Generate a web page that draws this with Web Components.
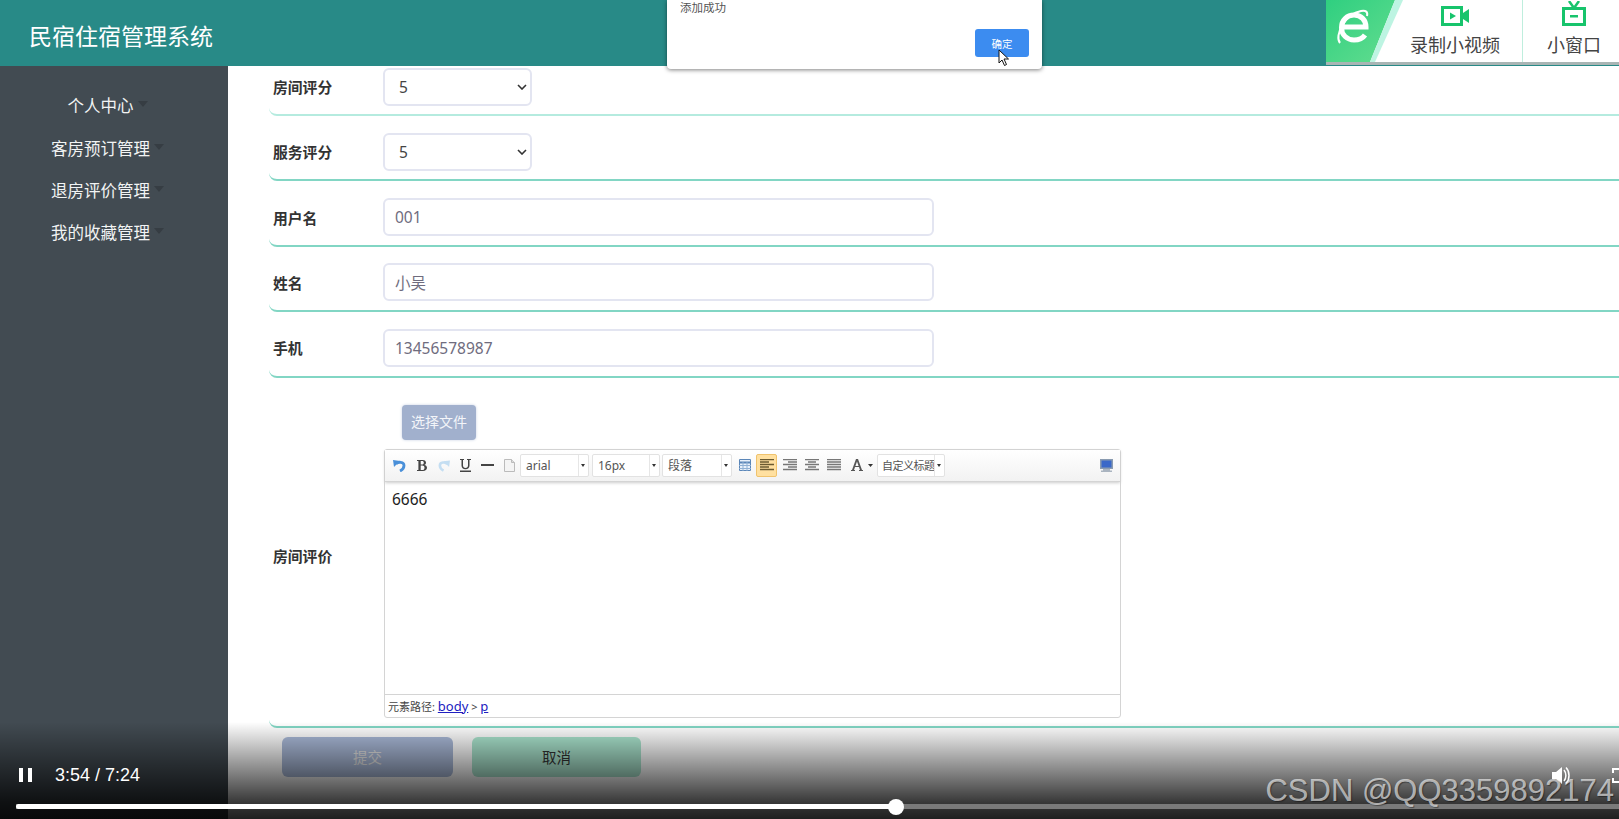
<!DOCTYPE html>
<html lang="zh">
<head>
<meta charset="utf-8">
<title>民宿住宿管理系统</title>
<style>
html, body {
	margin: 0;
	height: 100%;
	overflow: hidden;
}
body {
	font-family: "Noto Sans", "Noto Sans CJK SC", sans-serif;
	color: #333;
}
</style>
</head>
<body>

<stay-app>
	<stay-header slot="header">民宿住宿管理系统</stay-header>
	<side-menu slot="side">
		<menu-item>个人中心</menu-item>
		<menu-item>客房预订管理</menu-item>
		<menu-item>退房评价管理</menu-item>
		<menu-item>我的收藏管理</menu-item>
	</side-menu>

	<form-row label="房间评分" first><select-field>5</select-field></form-row>
	<form-row label="服务评分"><select-field>5</select-field></form-row>
	<form-row label="用户名"><text-field>001</text-field></form-row>
	<form-row label="姓名"><text-field>小吴</text-field></form-row>
	<form-row label="手机"><text-field>13456578987</text-field></form-row>
	<form-row label="房间评价" tall>
		<upload-button>选择文件</upload-button>
		<rich-editor>6666</rich-editor>
	</form-row>
	<form-actions></form-actions>

	<alert-box slot="over">添加成功</alert-box>
	<record-badge slot="over"></record-badge>
	<video-bar slot="over"></video-bar>
</stay-app>

<script>
class Shadowed extends HTMLElement {
	constructor() {
		super();
		this.attachShadow({mode:"open"});
		this.shadowRoot.innerHTML = this.constructor.HTML;
	}
}

class StayApp extends Shadowed {
	static HTML = `
	<style>
	:host {
		display: grid;
		grid-template: 66px 1fr / 228px 1fr;
		height: 819px;
		position: relative;
		overflow: hidden;
	}
	::slotted([slot=header]) { grid-column: 1 / 3; }
	main {
		overflow: hidden;
		padding: 0 0 0 41px;
		background: #fff;
	}
	</style>
	<slot name="header"></slot>
	<slot name="side"></slot>
	<main><slot></slot></main>
	<slot name="over"></slot>
	`;
}

class StayHeader extends Shadowed {
	static HTML = `
	<style>
	:host {
		display: flex;
		align-items: center;
		padding: 4px 0 0 29px;
		box-sizing: border-box;
		background: #288a87;
		color: #fff;
		font-size: 23px;
	}
	</style>
	<slot></slot>
	`;
}

class SideMenu extends Shadowed {
	static HTML = `
	<style>
	:host {
		display: flex;
		flex-direction: column;
		padding-top: 18px;
		background: #424b52;
	}
	</style>
	<slot></slot>
	`;
}

class MenuItem extends Shadowed {
	static HTML = `
	<style>
	:host {
		display: flex;
		justify-content: center;
		align-items: center;
		gap: 4px;
		height: 42.4px;
		padding-right: 27px;
		color: #f2f4f4;
		font-size: 16.5px;
	}
	i {
		width: 0;
		height: 0;
		margin-right: -14px;
		border: 5px solid transparent;
		border-top: 6px solid #363d43;
		border-bottom: 0;
		margin-top: -2px;
	}
	</style>
	<span><slot></slot></span><i></i>
	`;
}

class FormRow extends Shadowed {
	static HTML = `
	<style>
	:host {
		display: flex;
		align-items: center;
		box-sizing: border-box;
		height: 65.4px;
		padding: 16px 0 8px 4px;
		border-bottom: 2px solid #82d6c4;
		border-bottom-left-radius: 8px;
	}
	:host([first]) {
		height: 50px;
		padding-top: 2px;
		border-bottom-color: #b5ebdf;
	}
	:host([first]) label { padding-bottom: 2px; }
	:host([tall]) {
		height: 350px;
		padding: 0 0 0 4px;
	}
	:host([tall]) label { padding-top: 7px; }
	:host([tall]) .control { padding-top: 19px; }
	label {
		flex: none;
		width: 110px;
		font-size: 14.8px;
		font-weight: 700;
		color: #333;
	}
	.control {
		flex: 1;
		min-width: 0;
	}
	</style>
	<label></label>
	<div class="control"><slot></slot></div>
	`;
	connectedCallback() {
		this.shadowRoot.querySelector("label").textContent = this.getAttribute("label");
	}
}

class SelectField extends Shadowed {
	static HTML = `
	<style>
	:host {
		display: flex;
		align-items: center;
		justify-content: space-between;
		box-sizing: border-box;
		width: 149px;
		height: 38px;
		padding: 0 3px 0 14px;
		border: 2px solid #e3e5f1;
		border-radius: 6px;
		background: #fff;
		color: #444;
		font-size: 15.5px;
	}
	svg { display: block; }
	</style>
	<slot></slot>
	<svg width="10" height="6" viewBox="0 0 10 6"><path d="M1 1l4 4 4-4" fill="none" stroke="#333" stroke-width="1.6"/></svg>
	`;
}

class TextField extends Shadowed {
	static HTML = `
	<style>
	:host {
		display: flex;
		align-items: center;
		box-sizing: border-box;
		width: 551px;
		height: 38px;
		padding: 0 10px;
		border: 2px solid #e3e5f1;
		border-radius: 6px;
		background: #fff;
		color: #6f6c7e;
		font-size: 15.5px;
	}
	</style>
	<slot></slot>
	`;
}

class UploadButton extends Shadowed {
	static HTML = `
	<style>
	:host {
		display: flex;
		align-items: center;
		justify-content: center;
		box-sizing: border-box;
		width: 74px;
		height: 35px;
		margin: 0 0 9px 19px;
		padding-bottom: 2px;
		border-radius: 4px;
		background: #a1b0cd;
		box-shadow: 0 0 3px #c6d0e2;
		color: #f3f5f9;
		font-size: 14px;
	}
	</style>
	<slot></slot>
	`;
}

class RichEditor extends Shadowed {
	static HTML = `
	<style>
	:host {
		display: flex;
		flex-direction: column;
		box-sizing: border-box;
		width: 737px;
		height: 269px;
		margin-left: 1px;
		border: 1px solid #d4d4d4;
		border-radius: 3px;
		background: #fff;
	}
	.bar {
		flex: none;
		display: flex;
		align-items: center;
		height: 31px;
		padding-left: 8px;
		background: linear-gradient(#fff, #f2f2f2);
		border-bottom: 1px solid #d4d4d4;
		box-shadow: 0 1px 3px #ccc;
		position: relative;
	}
	.bar svg { display: block; flex: none; }
	.sel {
		flex: none;
		display: flex;
		box-sizing: border-box;
		height: 23px;
		border: 1px solid #e2e2e2;
		border-radius: 2px;
		background: #fff;
		color: #555;
		font-size: 12px;
		line-height: 21px;
		overflow: hidden;
	}
	.sel span { flex: 1; padding-left: 5px; white-space: nowrap; overflow: hidden; border-right: 1px solid #e6e6e6; }
	.sel i { flex: none; width: 9px; position: relative; }
	.sel i::after {
		content: "";
		position: absolute;
		left: 2px;
		top: 9px;
		border: 2.5px solid transparent;
		border-top: 3px solid #333;
		border-bottom: 0;
	}
	.active {
		flex: none;
		display: flex;
		align-items: center;
		justify-content: center;
		box-sizing: border-box;
		width: 21px;
		height: 23px;
		border: 1px solid #f0c36d;
		border-radius: 2px;
		background: #ffe0a0;
	}
	.body {
		flex: 1;
		padding: 5px 7px;
		color: #222;
		font-size: 15.5px;
		line-height: 24px;
	}
	.path {
		flex: none;
		height: 22px;
		padding-left: 3px;
		border-top: 1px solid #d4d4d4;
		color: #444;
		font-size: 11px;
		line-height: 22px;
		white-space: nowrap;
	}
	.path a { color: #2020c0; text-decoration: underline; font-size: 13px; }
	</style>
	<div class="bar">
		<svg width="13" height="13" viewBox="0 0 13 13" style="margin-right:11px"><path d="M0 1l7 1-6 6z" fill="#4a90d9"/><path d="M3 5c2-2.500 8-2.500 8 1.500 0 2.500-2 4.500-4 5.500" fill="none" stroke="#4a90d9" stroke-width="2.800"/></svg>
		<svg width="10" height="11" viewBox="0 0 10 11" style="margin-right:11px"><path d="M0 0h5.500C8 0 9 1.200 9 2.700c0 1.200-.7 2-1.800 2.300C8.800 5.200 10 6.200 10 7.800 10 9.800 8.500 11 6 11H0v-1h1.400V1H0zM3.700 1v3.500h1.400C6.200 4.500 6.800 3.800 6.800 2.700S6.200 1 5.100 1zM3.700 5.500V10h1.700c1.300 0 2.100-.8 2.100-2.300s-.8-2.200-2.200-2.200z" fill="#444"/></svg>
		<svg width="12" height="13" viewBox="0 0 13 13" style="margin-right:10px"><path d="M13 1L6 2l6 6z" fill="#c4def2"/><path d="M10 5C8 2.500 2 2.500 2 6.500 2 9 4 11 6 12" fill="none" stroke="#c4def2" stroke-width="2.800"/></svg>
		<svg width="11" height="13" viewBox="0 0 11 13" style="margin-right:10px"><path d="M0 0h4v1H3v5.500C3 8 4 9 5.500 9S8 8 8 6.500V1H7V0h4v1H9.500v5.500c0 2.400-1.500 3.700-4 3.700s-4-1.300-4-3.700V1H0zM0 11.500h11V13H0z" fill="#444"/></svg>
		<svg width="13" height="2" viewBox="0 0 13 2" style="margin-right:10px"><path d="M0 0h13v2H0z" fill="#444"/></svg>
		<svg width="11" height="13" viewBox="0 0 11 13" style="margin-right:5px"><path d="M.5.500h7l3 3v9H.5z" fill="#f4f4f4" stroke="#bbb"/><path d="M7.500.5v3h3" fill="#ddd" stroke="#bbb"/></svg>
		<div class="sel" style="width:69px;margin-right:3px"><span>arial</span><i></i></div>
		<div class="sel" style="width:68px;margin-right:2px"><span>16px</span><i></i></div>
		<div class="sel" style="width:70px;margin-right:7px"><span>段落</span><i></i></div>
		<svg width="12" height="12" viewBox="0 0 12 12" style="margin-right:5px"><path d="M.5.500h11v11H.5z" fill="#e8f0fa" stroke="#5b86b8"/><path d="M0 3.500h12" stroke="#5b86b8" stroke-width="2"/><path d="M4 3v9M8 3v9M0 6.500h12M0 9.500h12" stroke="#8fb0d4"/></svg>
		<div class="active" style="margin-right:6px"><svg width="14" height="12" viewBox="0 0 14 12"><path d="M0 .5h14M0 3h9M0 5.500h14M0 8h9M0 10.500h14" stroke="#6b5a30" stroke-width="1.300"/></svg></div>
		<svg width="14" height="12" viewBox="0 0 14 12" style="margin-right:8px"><path d="M0 .5h14M5 3h9M0 5.500h14M5 8h9M0 10.500h14" stroke="#777" stroke-width="1.300"/></svg>
		<svg width="14" height="12" viewBox="0 0 14 12" style="margin-right:8px"><path d="M0 .5h14M3 3h8M0 5.500h14M3 8h8M0 10.500h14" stroke="#777" stroke-width="1.300"/></svg>
		<svg width="14" height="12" viewBox="0 0 14 12" style="margin-right:10px"><path d="M0 .5h14M0 3h14M0 5.500h14M0 8h14M0 10.500h14" stroke="#777" stroke-width="1.300"/></svg>
		<svg width="12" height="12" viewBox="0 0 12 12" style="margin-right:5px"><path d="M0 12v-1h1L5 0h2l4 11h1v1H8v-1h1L8 8H4l-1 3h1v1zM4.400 7h3.200L6 2.500z" fill="#555"/></svg>
		<svg width="5" height="3" viewBox="0 0 5 3" style="margin-right:4px"><path d="M0 0h5L2.500 3z" fill="#333"/></svg>
		<div class="sel" style="width:68px"><span style="font-size:11px;letter-spacing:-.5px;padding-left:4px">自定义标题</span><i></i></div>
		<svg width="13" height="13" viewBox="0 0 13 13" style="margin-left:auto;margin-right:7px"><path d="M0 0h13v10H0z" fill="#8a9bb0"/><path d="M1.500 1.500h10v7h-10z" fill="#3a68c8"/><path d="M3 10h7v1.500H3zM1 11.500h11V13H1z" fill="#aab4c0"/></svg>
	</div>
	<div class="body"><slot></slot></div>
	<div class="path">元素路径: <a>body</a> &gt; <a>p</a></div>
	`;
}

class FormActions extends Shadowed {
	static HTML = `
	<style>
	:host {
		display: flex;
		gap: 19px;
		padding: 9px 0 0 13px;
	}
	div {
		display: flex;
		align-items: center;
		justify-content: center;
		width: 171px;
		height: 40px;
		border-radius: 6px;
		font-size: 14.5px;
	}
	.save { background: #aabad9; color: #e8e8e8; }
	.off { background: #abe6cf; color: #333; width: 169px; }
	</style>
	<div class="save">提交</div>
	<div class="off">取消</div>
	`;
}

class AlertBox extends Shadowed {
	static HTML = `
	<style>
	:host {
		position: absolute;
		left: 667px;
		top: 0;
		width: 375px;
		height: 69px;
		box-sizing: border-box;
		padding: 0 13px;
		background: #fff;
		border-radius: 0 0 4px 4px;
		box-shadow: 0 1px 4px rgba(0,0,0,.5);
		color: #555;
		font-size: 11.5px;
	}
	p {
		margin: 0;
		line-height: 15px;
	}
	.row {
		display: flex;
		justify-content: flex-end;
		margin-top: 14px;
	}
	button {
		width: 54px;
		height: 28px;
		padding: 0;
		border: 0;
		border-radius: 3px;
		background: #3c8cf0;
		color: #fff;
		font: inherit;
		font-size: 10.5px;
	}
	svg {
		position: absolute;
		left: 331px;
		top: 49px;
	}
	</style>
	<p><slot></slot></p>
	<div class="row"><button>确定</button></div>
	<svg width="12" height="18" viewBox="0 0 12 18"><path d="M1 1v13l3-3 2.500 5.500 2-1L6 10h4.500z" fill="#fff" stroke="#111"/></svg>
	`;
}

class RecordBadge extends Shadowed {
	static HTML = `
	<style>
	:host {
		position: absolute;
		left: 1326px;
		right: 0;
		top: 0;
		height: 62px;
		display: flex;
		background: #fff;
		border-bottom: 3px solid #a9b5b4;
		color: #444;
		font-size: 18px;
	}
	.logo {
		flex: none;
		width: 78px;
		height: 62px;
		display: block;
	}
	.cell {
		display: flex;
		flex-direction: column;
		align-items: center;
		justify-content: flex-end;
		padding-bottom: 5px;
		gap: 5px;
		box-sizing: border-box;
	}
	.rec { width: 119px; padding-right: 16px; border-right: 1px solid #bfeedd; }
	.mini { flex: 1; padding-left: 6px; }
	.cell svg { display: block; }
	</style>
	<svg class="logo" viewBox="0 0 78 62">
		<defs><linearGradient id="g" x1="0" y1="0" x2="1" y2="1"><stop offset="0" stop-color="#2fcf80"/><stop offset="1" stop-color="#63dd8f"/></linearGradient></defs>
		<path d="M0 0h69L44 62H0z" fill="url(#g)"/>
		<path d="M69 0h8L49 62h-5z" fill="#bdf4e2"/>
		<path d="M16 27h24c0-7-5-12-12-12s-12.500 5-12.500 12.500S21 40 28 40c5 0 9-2 11-5" fill="none" stroke="#fff" stroke-width="5"/>
		<path d="M14 43C8 36 19 14 35 11c5-1 7 1 6 5" fill="none" stroke="#fff" stroke-width="2"/>
	</svg>
	<div class="cell rec">
		<svg width="28" height="20" viewBox="0 0 28 20"><rect x="1.500" y="1.500" width="19" height="17" fill="none" stroke="#17c46c" stroke-width="3"/><path d="M9 6.500l6 3.500-6 3.500z" fill="#17c46c"/><path d="M22 7l6-4v14l-6-4z" fill="#17c46c"/></svg>
		<span>录制小视频</span>
	</div>
	<div class="cell mini">
		<svg width="24" height="25" viewBox="0 0 24 25"><rect x="1.500" y="7.500" width="21" height="16" fill="none" stroke="#17c46c" stroke-width="3"/><path d="M7 0l5 7 5-7" fill="none" stroke="#17c46c" stroke-width="2.500"/><path d="M8 14h8v2.500H8z" fill="#17c46c"/></svg>
		<span>小窗口</span>
	</div>
	`;
}

class VideoBar extends Shadowed {
	static HTML = `
	<style>
	:host {
		position: absolute;
		left: 0;
		right: 0;
		bottom: 0;
		height: 97px;
		display: flex;
		flex-direction: column;
		justify-content: flex-end;
		background: linear-gradient(rgba(0,0,0,0), rgba(0,0,0,.78) 83%, rgba(0,0,0,.88));
		font-family: "Liberation Sans", sans-serif;
		color: #fff;
	}
	.row {
		display: flex;
		align-items: center;
		height: 22px;
		padding-left: 19px;
		margin-bottom: 18px;
		font-size: 18px;
	}
	.pause {
		width: 13px;
		height: 14px;
		margin-right: 23px;
		border-left: 4px solid #fff;
		border-right: 4px solid #fff;
		box-sizing: border-box;
	}
	.track {
		height: 5px;
		margin: 0 0 10px 16px;
		background: #7a7a7a;
		position: relative;
	}
	.done {
		width: 880px;
		height: 5px;
		background: #fff;
		border-radius: 3px 0 0 3px;
	}
	.thumb {
		position: absolute;
		left: 872px;
		top: -5.500px;
		width: 16px;
		height: 16px;
		border-radius: 50%;
		background: #fff;
	}
	.volume { position: absolute; left: 1552px; top: 44px; }
	.full { position: absolute; left: 1612px; top: 46px; }
	.mark {
		position: absolute;
		right: 5px;
		bottom: 10px;
		font-size: 31px;
		line-height: 36px;
		color: rgba(255,255,255,.62);
		text-shadow: 1px 1px 1px rgba(0,0,0,.4);
		white-space: nowrap;
	}
	</style>
	<div class="row"><div class="pause"></div><span>3:54 / 7:24</span></div>
	<div class="track"><div class="done"></div><div class="thumb"></div></div>
	<svg class="volume" width="19" height="19" viewBox="0 0 19 19"><path d="M0 6h4l6-5v17l-6-5H0z" fill="#fff"/><path d="M12 4c2.500 3 2.500 8 0 11M14 1.500c4 4 4 12 0 16" fill="none" stroke="#fff" stroke-width="1.500"/></svg>
	<svg class="full" width="7" height="15" viewBox="0 0 7 15"><path d="M7 1H1v4M7 14H1v-4" fill="none" stroke="#fff" stroke-width="2"/></svg>
	<div class="mark">CSDN @QQ3359892174</div>
	`;
}

customElements.define("stay-app", StayApp);
customElements.define("stay-header", StayHeader);
customElements.define("side-menu", SideMenu);
customElements.define("menu-item", MenuItem);
customElements.define("form-row", FormRow);
customElements.define("select-field", SelectField);
customElements.define("text-field", TextField);
customElements.define("upload-button", UploadButton);
customElements.define("rich-editor", RichEditor);
customElements.define("form-actions", FormActions);
customElements.define("alert-box", AlertBox);
customElements.define("record-badge", RecordBadge);
customElements.define("video-bar", VideoBar);
</script>
</body>
</html>
